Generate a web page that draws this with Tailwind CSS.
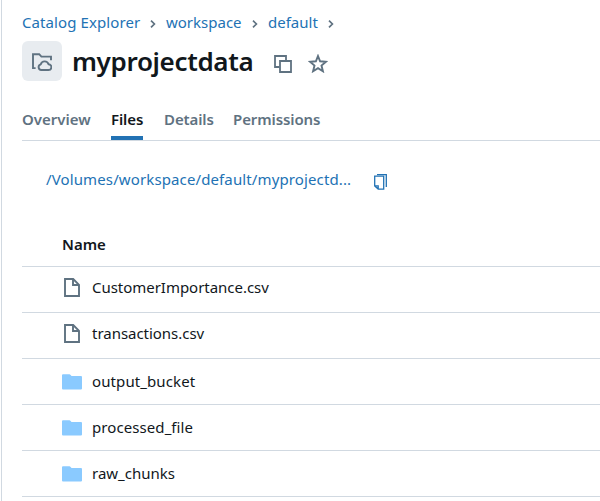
<!DOCTYPE html>
<html lang="en">
<head>
<meta charset="utf-8">
<title>myprojectdata</title>
<script src="https://cdn.jsdelivr.net/npm/@tailwindcss/browser@4"></script>
</head>
<body class="bg-white">
<main class="ml-px h-[501px] w-[599px] overflow-hidden border-l border-[#d1d9e1] pl-5 font-['Noto_Sans','Open_Sans',sans-serif] text-[15px] text-[#11171c]">
  <nav class="flex h-[41px] items-center pt-[3px] text-[#2272b4]">
    <a class="w-[118px] whitespace-nowrap tracking-[0.09px]">Catalog Explorer</a>
    <svg class="mx-[10px] mt-[3px] h-[8px] w-[6px]" viewBox="0 0 6 8" fill="none" stroke="#5f7281" stroke-width="1.7"><path d="M1 .7 4.4 4 1 7.3"/></svg>
    <a class="w-[76px] whitespace-nowrap">workspace</a>
    <svg class="mx-[10px] mt-[3px] h-[8px] w-[6px]" viewBox="0 0 6 8" fill="none" stroke="#5f7281" stroke-width="1.7"><path d="M1 .7 4.4 4 1 7.3"/></svg>
    <a class="w-[50px] whitespace-nowrap">default</a>
    <svg class="mx-[10px] mt-[3px] h-[8px] w-[6px]" viewBox="0 0 6 8" fill="none" stroke="#5f7281" stroke-width="1.7"><path d="M1 .7 4.4 4 1 7.3"/></svg>
  </nav>
  <header class="flex h-10 items-center">
    <div class="flex size-10 items-center justify-center rounded-md bg-[#e8ecf0]">
      <svg class="mt-[2px] size-5" viewBox="0 0 20 20" fill="none" stroke="#5f7281" stroke-width="1.9"><path d="M3.6 16.1H1V2.2h6.2l2.2 2.4H19v3.6"/><path d="M9.3 18a2.9 2.9 0 0 1-.5-5.7 4 4 0 0 1 7.7-.1 2.9 2.9 0 0 1-.1 5.8z" stroke-linejoin="round"/></svg>
    </div>
    <h1 class="ml-[10px] w-[181px] whitespace-nowrap text-[26px] font-semibold tracking-[-0.34px]">myprojectdata</h1>
    <svg class="ml-[21px] mt-[6px] size-[18px]" viewBox="0 0 18 18" fill="none" stroke="#5f7281" stroke-width="1.8"><path d="M5.5 12H1V1h11v4.5"/><path d="M6 6h11v11H6z"/></svg>
    <svg class="ml-[16px] mt-[5px] h-[19px] w-5" viewBox="0 0 20 19" fill="none" stroke="#5f7281" stroke-width="1.9"><path d="m10 2 2.1 5.3 5.9.4-4.5 3.8 1.4 5.7-4.9-3.1-4.9 3.1 1.4-5.7L2 7.7l5.9-.4z"/></svg>
  </header>
  <nav class="flex h-[60px] gap-5 border-b border-[#d1d9e1] pt-[27px] font-semibold tracking-[-0.1px] text-[#5f7281]">
    <a class="w-[69px] whitespace-nowrap tracking-normal">Overview</a>
    <a class="h-8 w-8 whitespace-nowrap border-b-4 border-[#2272b4] text-[#11171c]">Files</a>
    <a class="ml-px w-[50px] whitespace-nowrap">Details</a>
    <a class="-ml-px w-[87px] whitespace-nowrap">Permissions</a>
  </nav>
  <div class="flex h-[81px] items-center pb-1 pl-6 text-[#2272b4]">
    <a class="w-[306px] whitespace-nowrap tracking-[0.12px]">/Volumes/workspace/default/myprojectd...</a>
    <svg class="ml-[22px] mt-[4px] h-4 w-[13px]" viewBox="0 0 13 16" fill="none" stroke="#2272b4" stroke-width="1.3"><path d="M.7 2.2h9v12.9H4.2L.7 12zM.7 11.8h3.5v3.3"/><path d="M3 .7h9.3v12.2"/></svg>
  </div>
  <div class="flex h-[45px] items-center border-b border-[#d1d9e1] pl-10 font-semibold">Name</div>
  <ul>
    <li class="flex h-[46px] items-center border-b border-[#d1d9e1] pb-1 pl-[42px]">
      <svg class="mr-3 h-[19px] w-4" viewBox="0 0 16 19" fill="none" stroke="#5f7281" stroke-width="1.9"><path d="M1 1h8.2L15 6.8V18H1z"/><path d="M9 1v6h6"/></svg>
      <span class="tracking-[-0.03px]">CustomerImportance.csv</span>
    </li>
    <li class="flex h-[46px] items-center border-b border-[#d1d9e1] pb-1 pl-[42px]">
      <svg class="mr-3 h-[19px] w-4" viewBox="0 0 16 19" fill="none" stroke="#5f7281" stroke-width="1.9"><path d="M1 1h8.2L15 6.8V18H1z"/><path d="M9 1v6h6"/></svg>
      <span class="tracking-[-0.03px]">transactions.csv</span>
    </li>
    <li class="flex h-[46px] items-center border-b border-[#d1d9e1] pl-10">
      <svg class="mr-[10px] h-4 w-5" viewBox="0 0 20 16" fill="#8acaff"><path d="M0 1.2Q0 .3 1 .3h6.4q.7 0 1.2.7L9.5 2H19q1 0 1 1v11.5q0 1-1 1H1q-1 0-1-1z"/></svg>
      <span class="tracking-[0.1px]">output_bucket</span>
    </li>
    <li class="flex h-[46px] items-center border-b border-[#d1d9e1] pl-10">
      <svg class="mr-[10px] h-4 w-5" viewBox="0 0 20 16" fill="#8acaff"><path d="M0 1.2Q0 .3 1 .3h6.4q.7 0 1.2.7L9.5 2H19q1 0 1 1v11.5q0 1-1 1H1q-1 0-1-1z"/></svg>
      <span class="tracking-[0.08px]">processed_file</span>
    </li>
    <li class="flex h-[46px] items-center border-b border-[#d1d9e1] pl-10">
      <svg class="mr-[10px] h-4 w-5" viewBox="0 0 20 16" fill="#8acaff"><path d="M0 1.2Q0 .3 1 .3h6.4q.7 0 1.2.7L9.5 2H19q1 0 1 1v11.5q0 1-1 1H1q-1 0-1-1z"/></svg>
      <span>raw_chunks</span>
    </li>
  </ul>
</main>
</body>
</html>
